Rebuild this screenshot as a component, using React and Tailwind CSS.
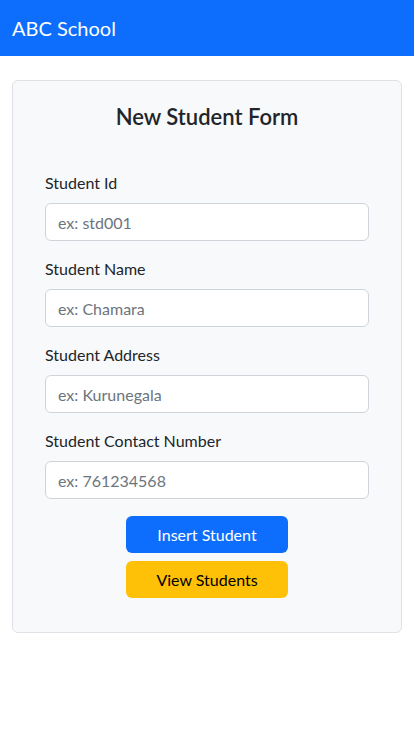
export default function App() {
  const fields = [
    ["Student Id", "ex: std001"],
    ["Student Name", "ex: Chamara"],
    ["Student Address", "ex: Kurunegala"],
    ["Student Contact Number", "ex: 761234568"],
  ];
  return (
    <div className="min-h-[736px] bg-white text-[#212529]" style={{ fontFamily: '"Lato", "Noto Sans", sans-serif' }}>
      <nav className="h-14 bg-[#0d6efd] flex items-center px-3">
        <span className="text-white text-[20px] leading-[30px]">ABC School</span>
      </nav>
      <div className="px-3 pt-6">
        <div className="border border-[#dee2e6] rounded-md bg-[#f8f9fa] px-8 pt-[21px] pb-[34px]">
          <h4 className="text-center text-[22px] font-semibold leading-[29px] mb-[40px]">New Student Form</h4>
          {fields.map(([label, ph]) => (
            <div key={label} className="mb-4">
              <label className="block text-[16px] leading-6 mb-2">{label}</label>
              <input
                placeholder={ph}
                className="w-full h-[38px] px-3 text-[16px] bg-white border border-[#ced4da] rounded-md placeholder:text-[#6c757d] outline-none"
              />
            </div>
          ))}
          <div className="flex flex-col items-center gap-2 pt-[1px]">
            <button className="w-1/2 h-[37px] bg-[#0d6efd] text-white rounded-md text-[16px]">Insert Student</button>
            <button className="w-1/2 h-[37px] bg-[#ffc107] text-black rounded-md text-[16px]">View Students</button>
          </div>
        </div>
      </div>
    </div>
  );
}
